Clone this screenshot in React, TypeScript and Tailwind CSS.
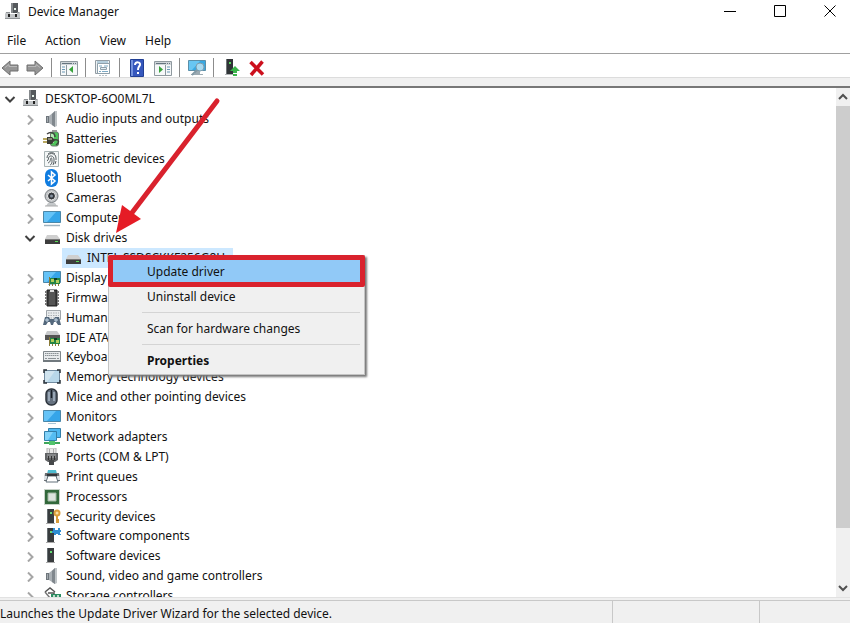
import React from 'react';

type IconProps = { children: React.ReactNode; className?: string };

const Icon: React.FC<IconProps> = ({ children, className = 'h-[18px] w-[18px]' }) => (
  <svg viewBox="0 0 18 18" className={`${className} shrink-0`} aria-hidden="true">
    {children}
  </svg>
);

const ComputerTower = () => (
  <Icon>
    <path d="M7 0h7v10H7z" fill="#55595c" />
    <path d="M7 0h2v10H7z" fill="#85898c" />
    <path d="M10 5h2v2h-2z" fill="#e9f5ec" />
    <path d="M2 9h4v2h7V9h3v7H1v-5z" fill="#c3c6c8" />
    <path d="M2 9h4v1H2zM13 9h2v1h-2zM1 15h15v1H1z" fill="#8f9396" />
    <path d="M4 11h2v3H4zM11 11h2v3h-2z" fill="#222" />
  </Icon>
);

const Speaker = () => (
  <Icon>
    <path d="M3 6h3v7H3z" fill="#6f767c" />
    <path d="M4 7h1v5H4z" fill="#a4abb0" />
    <path d="M6 6l6-5v16l-6-4z" fill="#a9afb4" />
    <path d="M9 4l3-3v16l-3-2z" fill="#80878d" />
    <path d="M12 1h2v15l-2 1z" fill="#bfc4c7" />
  </Icon>
);

const Battery = () => (
  <Icon>
    <rect x="7.500" y="2" width="8" height="14" rx="2" fill="#4fc45a" stroke="#69756b" />
    <path d="M8 4h3v9H8z" fill="#b4ecb4" />
    <path d="M9 0h5v2H9z" fill="#999" />
    <path d="M4 4c4-3 8-1 8 3" fill="none" stroke="#444" strokeWidth="1.500" />
    <path d="M4 7h5l3 3-3 4H4z" fill="#3b3c36" />
    <path d="M5 8h4v2H5z" fill="#888a78" />
    <path d="M0 9h4M0 12h4" stroke="#a18a2c" strokeWidth="1.500" />
    <path d="M11 10c5-1 6 2 2 5" fill="none" stroke="#3d453d" strokeWidth="1.500" />
  </Icon>
);

const Fingerprint = () => (
  <Icon>
    <path d="M1.500 1.500h14v15h-14z" fill="#f4f7f7" stroke="#a8b3b4" />
    <g fill="none" stroke="#586064">
      <path d="M4 8c0-6 9-6 9 0v2M4 11c2-1 1-3 2-4 1-2 5-1 5 2v3" />
      <path d="M5 13c3-1 2-4 3-5s1 3 1 4-1 3-2 3M10 15l1-3M5 4c2-2 5-2 7 0M12 14l1-3" />
    </g>
  </Icon>
);

const Bluetooth = () => (
  <Icon>
    <rect x="2" y="0" width="13" height="18" rx="6" fill="#0f7ce0" />
    <path d="M5 6l7 6-3.500 3V3L12 6l-7 6" fill="none" stroke="#fff" strokeWidth="1.500" />
  </Icon>
);

const Camera = () => (
  <Icon>
    <path d="M5 14h7l2 3H3z" fill="#c4c7c9" />
    <circle cx="8.500" cy="7" r="6.500" fill="#c1c4c6" stroke="#777c80" />
    <circle cx="8.500" cy="7" r="4" fill="#34383c" stroke="#eee" />
    <circle cx="8.500" cy="7" r="1.500" fill="#8792a0" />
    <path d="M2 17h13" stroke="#aaa" />
  </Icon>
);

const Screen: React.FC<{ base?: boolean }> = ({ base }) => (
  <>
    <path d="M.5 2.500h17v11H.5z" fill="#36a5e8" stroke="#4b87a8" />
    <path d="M1 3h12L4 13H1z" fill="#65c3f7" />
    {base ? <path d="M1 16.500h16" stroke="#9fb3bf" strokeWidth="1.500" /> : <path d="M5 15.500h8" stroke="#a8c6d7" />}
  </>
);

const Computer = () => <Icon><Screen base /></Icon>;
const Monitor = () => <Icon><Screen /></Icon>;

const Disk = () => (
  <Icon>
    <path d="M4 6h10l3 4H2z" fill="#cfcfcf" />
    <path d="M2 10h15v5H2z" fill="#3e3e3e" />
    <path d="M2 10h15v1H2z" fill="#777" />
    <path d="M12 12h3v1h-3z" fill="#59db57" />
  </Icon>
);

const Board = () => (
  <>
    <path d="M7 9h10v6H7z" fill="#238443" />
    <path d="M8 10h3v3H8zM13 11h3v3h-3z" fill="#b1cc5b" />
    <path d="M6.500 8v9M9.500 15v2M12.500 15v2M15.500 15v2" stroke="#8a7a36" />
    <path d="M11 9h3v2h-3z" fill="#113e24" />
  </>
);

const Display = () => <Icon><Screen /><Board /></Icon>;

const IdeController = () => (
  <Icon>
    <path d="M4 2h10l3 4H2z" fill="#c8cacc" />
    <path d="M2 6h15v5H2z" fill="#555" />
    <Board />
  </Icon>
);

const Firmware = () => (
  <Icon>
    <path d="M4 1h10v16H4z" fill="#3c3c3c" stroke="#222" />
    <path d="M6 2h6v14H6z" fill="#555" />
    <path d="M3 2v15M15 2v15" stroke="#777" strokeWidth="2" strokeDasharray="2 1" />
    <path d="M7 1h4v2H7z" fill="#ddd" />
  </Icon>
);

const Gamepad = () => (
  <Icon>
    <path d="M3.500 1.500h14v9h-14z" fill="#e9ecee" stroke="#9fa5aa" />
    <path d="M5 4h11M5 6.500h11M5 9h11" stroke="#a8adb1" strokeDasharray="1.500 1" />
    <path d="M2 8h4l1 2h4l1-2h4l2 8h-3l-2-3h-2l-1 3H8l-1-3H5l-2 3H0z" fill="#54687c" />
    <path d="M4 9v4M2 11h4M13 9v4M11 11h4" stroke="#c7d9e8" />
  </Icon>
);

const Keyboard = () => (
  <Icon>
    <path d="M.5 3.500h17v10H.5z" fill="#e7eaec" stroke="#7f878b" />
    <path d="M2 5.500h14M2 7.500h14" stroke="#8b9296" strokeDasharray="1.500 .5" />
    <path d="M2 10.500h2M5 10.500h8M14 10.500h2" stroke="#8b9296" />
    <path d="M0 12h18v2H0z" fill="#71797e" />
  </Icon>
);

const MemoryCard = () => (
  <Icon>
    <rect x="1.500" y="2.500" width="15" height="12" rx="1" fill="#b8d7e9" stroke="#718ba0" />
    <path d="M2 3h10L4 14H2z" fill="#d0e4ef" />
    <path d="M1 5V2h3M14 2h3v3M17 12v3h-3M4 15H1v-3" fill="none" stroke="#29323a" strokeWidth="1.500" />
  </Icon>
);

const Mouse = () => (
  <Icon>
    <rect x="3" y="1" width="11" height="16" rx="5" fill="#65717f" stroke="#2c333b" strokeWidth="1.500" />
    <path d="M6 4v9M11 4v9" stroke="#a9b8c7" strokeWidth="1.500" />
    <path d="M8.500 2v8" stroke="#171e26" strokeWidth="1.500" />
  </Icon>
);

const Network = () => (
  <Icon>
    <path d="M5.500 .5h12v9h-12z" fill="#4db8f1" stroke="#327fa9" />
    <path d="M1.500 3.500h12v9h-12z" fill="#55bdf2" stroke="#327fa9" />
    <path d="M2 4h8l-5 8H2z" fill="#83d3f9" />
    <path d="M7 13h3v2H7zM1 14h16v2H1z" fill="#3fa75a" />
    <path d="M6 13h6v4H6z" fill="#52c46c" />
  </Icon>
);

const Port = () => (
  <Icon>
    <path d="M4 0h9v6H4z" fill="#e8e8e8" stroke="#b3b3b3" />
    <path d="M6.500 1v4M10.500 1v4" stroke="#a9a9a9" />
    <path d="M2 5h13v7l-3 2H5l-3-2z" fill="#626466" />
    <path d="M4 6h9v4H4z" fill="#858789" />
    <path d="M6 12h5v5H6z" fill="#46484a" />
    <path d="M5 8h1v4H5zM8 8h1v4H8zM11 8h1v4h-1z" fill="#333" />
  </Icon>
);

const Printer = () => (
  <Icon>
    <path d="M5 2h8l1 4H4z" fill="#4dbbd0" />
    <path d="M2 5h14l1 8H1z" fill="#696e72" />
    <path d="M1 8h3v4H1zM14 8h3v4h-3z" fill="#dbe1e5" />
    <path d="M5 8h8l2 6H3z" fill="#fff" stroke="#63717a" />
    <path d="M4 6h10v2H4z" fill="#31363a" />
  </Icon>
);

const Processor = () => (
  <Icon>
    <path d="M1.500 1.500h15v15h-15z" fill="none" stroke="#8fa491" strokeDasharray="1 1" />
    <path d="M2 2h14v14H2z" fill="#32683b" />
    <path d="M5 5h8v8H5z" fill="#dce3dd" stroke="#a0b8a2" />
  </Icon>
);

const Tower = () => (
  <>
    <path d="M4 1h7v14H4z" fill="#383c3e" />
    <path d="M4 1h1v14H4z" fill="#697074" />
    <path d="M7 4h2v2H7z" fill="#65de74" />
    <path d="M3 15h9v1H3z" fill="#aaa" />
  </>
);

const Security = () => (
  <Icon>
    <Tower />
    <path d="M14 6v9M14 12h2M14 14h2" stroke="#d99c39" strokeWidth="2" />
    <circle cx="14" cy="5" r="2.500" fill="#f8dfa2" stroke="#d99c39" strokeWidth="2" />
  </Icon>
);

const SoftwareComponent = () => (
  <Icon>
    <Tower />
    <path d="M10 1h2v2h3V1h2v2h1v2h-1v2h1v1h-3V7h-2v1h-2V6H9V4h1z" fill="#2f8ed2" />
  </Icon>
);

const SoftwareDevice = () => <Icon><Tower /></Icon>;

const Storage = () => (
  <Icon>
    <path d="M2 5l5-4 5 4M5 6h6v2H8" fill="none" stroke="#555" strokeWidth="1.500" />
    <path d="M2 5l5 6" stroke="#777" strokeWidth="1.500" />
    <path d="M8 7h10v6H8z" fill="#2c8c62" />
    <path d="M10 8h2v2h-2zM14 8h2v2h-2z" fill="#bcd9c9" />
  </Icon>
);

const devices: { name: string; icon: React.FC; child?: string }[] = [
  { name: 'Audio inputs and outputs', icon: Speaker },
  { name: 'Batteries', icon: Battery },
  { name: 'Biometric devices', icon: Fingerprint },
  { name: 'Bluetooth', icon: Bluetooth },
  { name: 'Cameras', icon: Camera },
  { name: 'Computer', icon: Computer },
  { name: 'Disk drives', icon: Disk, child: 'INTEL SSDSCKKF256G8H' },
  { name: 'Display adapters', icon: Display },
  { name: 'Firmware', icon: Firmware },
  { name: 'Human Interface Devices', icon: Gamepad },
  { name: 'IDE ATA/ATAPI controllers', icon: IdeController },
  { name: 'Keyboards', icon: Keyboard },
  { name: 'Memory technology devices', icon: MemoryCard },
  { name: 'Mice and other pointing devices', icon: Mouse },
  { name: 'Monitors', icon: Monitor },
  { name: 'Network adapters', icon: Network },
  { name: 'Ports (COM & LPT)', icon: Port },
  { name: 'Print queues', icon: Printer },
  { name: 'Processors', icon: Processor },
  { name: 'Security devices', icon: Security },
  { name: 'Software components', icon: SoftwareComponent },
  { name: 'Software devices', icon: SoftwareDevice },
  { name: 'Sound, video and game controllers', icon: Speaker },
  { name: 'Storage controllers', icon: Storage },
];

const Chevron: React.FC<{ open?: boolean; label: string }> = ({ open, label }) => (
  <button type="button" aria-label={`${open ? 'Collapse' : 'Expand'} ${label}`} className="flex h-4 w-4 shrink-0 items-center justify-center">
    <svg viewBox="0 0 12 12" className="h-3 w-3" fill="none" strokeWidth="2" aria-hidden="true">
      {open ? <path d="M1.500 4L6 8.500 10.500 4" stroke="#404040" /> : <path d="M4 2.500L8.500 7 4 11.500" stroke="#a6a6a6" />}
    </svg>
  </button>
);

const WindowFrame = () => (
  <>
    <path d="M.5 2.500h17v14H.5z" fill="#f6f8f9" stroke="#8f999f" />
    <path d="M1 3h16v3H1z" fill="#cfd5d9" />
    <path d="M2 4.500h10M13 4.500h1M15 4.500h1" stroke="#65747f" />
  </>
);

const ToolButton: React.FC<{ label: string; children: React.ReactNode }> = ({ label, children }) => (
  <button type="button" aria-label={label} title={label} className="shrink-0 first:ml-px">
    <Icon>{children}</Icon>
  </button>
);

const Divider = () => <span className="mr-2 ml-[7px] h-5 w-px shrink-0 bg-[#8c8c8c]" />;

const Toolbar = () => (
  <div role="toolbar" aria-label="Tools" className="flex h-6 items-center border-t border-[#a0a0a0] bg-white pt-1">
    <ToolButton label="Back">
      <path d="M1 9l8-7v4h8v6H9v4z" fill="#969696" stroke="#6e6e6e" />
      <path d="M4 8.500l4-3v2h8" fill="none" stroke="#b9b9b9" />
    </ToolButton>
    <span className="w-[7px]" />
    <ToolButton label="Forward">
      <path d="M17 9L9 2v4H1v6h8v4z" fill="#969696" stroke="#6e6e6e" />
      <path d="M2 7.500h8v-2l4 3" fill="none" stroke="#b9b9b9" />
    </ToolButton>
    <Divider />
    <ToolButton label="Show console tree">
      <WindowFrame />
      <path d="M6.500 6v10" stroke="#8b989f" />
      <path d="M2 8h3M2 10.500h3M2 13h3" stroke="#6997b5" />
      <path d="M13 7v7l-4-3.500z" fill="#38a33c" />
    </ToolButton>
    <Divider />
    <ToolButton label="Properties">
      <path d="M1.500 1.500h14v13h-14z" fill="#edf1f3" stroke="#929ca3" />
      <path d="M3.500 4.500h12v10h-12z" fill="#fff" stroke="#8fa0aa" />
      <path d="M3 3h11M5 7h3M10 7h4M5 12.500h2M8 12.500h6" stroke="#7baac5" />
      <path d="M6.500 8.500h6v2h-6z" fill="#e2edf3" stroke="#8fa0aa" />
      <path d="M5 16.500h9" stroke="#b9c1c6" strokeDasharray="2 1" />
    </ToolButton>
    <Divider />
    <ToolButton label="Help">
      <path d="M2.500.5h13v17h-13z" fill="#3557bd" stroke="#213f94" />
      <path d="M3 1h2v16H3z" fill="#7392df" />
      <path d="M7 6c0-4 6-3 5 0-1 2-2 2-2 5" fill="none" stroke="#fff" strokeWidth="2" />
      <path d="M9 13h2v2H9z" fill="#fff" />
    </ToolButton>
    <span className="w-2" />
    <ToolButton label="Show action pane">
      <WindowFrame />
      <path d="M11.500 6v10" stroke="#8b989f" />
      <path d="M13 8h3M13 10.500h3M13 13h3" stroke="#6997b5" />
      <path d="M5 7v7l4-3.500z" fill="#38a33c" />
    </ToolButton>
    <Divider />
    <ToolButton label="Scan for hardware changes">
      <path d="M.5 1.500h17v10H.5z" fill="#38a9e3" stroke="#5a8fa9" />
      <path d="M1 2h11L4 11H1z" fill="#68c6f3" />
      <path d="M7 12h5v3H7zM3 15h12v1H3z" fill="#9caab2" />
      <circle cx="12" cy="8" r="4" fill="#a8daf1" stroke="#7e9eaf" />
      <path d="M9 11l-5 5" stroke="#8299a5" strokeWidth="2" />
    </ToolButton>
    <Divider />
    <ToolButton label="Update driver">
      <path d="M4 0h7v15H4z" fill="#303437" />
      <path d="M4 0h1v15H4z" fill="#72777a" />
      <path d="M7 3h2v2H7z" fill="#55d75d" />
      <path d="M3 15h8v1H3z" fill="#b0b3b5" />
      <path d="M13 7l5 5h-3v2h-4v-2H8zM11 15h4v2h-4z" fill="#39b54a" />
    </ToolButton>
    <span className="w-2" />
    <ToolButton label="Uninstall device">
      <path d="M2.500 3L15 15.500M14.500 2.500L3 16" stroke="#cc101d" strokeWidth="3.500" />
    </ToolButton>
  </div>
);

const ContextMenu = () => (
  <div className="absolute top-[167px] left-[108px] z-10 w-[257px] border border-[#c4c4c4] bg-[#f0f0f0] shadow-[2px_2px_2px_#777]" role="menu">
    <button type="button" role="menuitem" className="block h-7 w-full bg-[#91c9f7] pt-1 pl-[38px] text-left">Update driver</button>
    <button type="button" role="menuitem" className="block h-[26px] w-full pl-[38px] text-left">Uninstall device</button>
    <hr className="mt-0.5 mr-1 mb-[3px] ml-[33px] border-[#d4d4d4]" />
    <button type="button" role="menuitem" className="block h-[26px] w-full pl-[38px] text-left">Scan for hardware changes</button>
    <hr className="mt-0.5 mr-1 mb-[3px] ml-[33px] border-[#d4d4d4]" />
    <button type="button" role="menuitem" className="block h-[26px] w-full pl-[38px] text-left font-bold">Properties</button>
    <div className="pointer-events-none absolute -top-px -left-px h-8 w-[257px] rounded-xs border-[5px] border-[#d9222d]" />
  </div>
);

const DeviceTree = () => (
  <ul role="tree" aria-label="Devices" className="mt-px grid h-[517px] flex-1 auto-rows-fr">
    <li role="treeitem" aria-expanded="true" className="flex items-center pl-0.5">
      <Chevron open label="DESKTOP-6O0ML7L" />
      <span className="ml-1"><ComputerTower /></span>
      <span className="ml-[5px]">DESKTOP-6O0ML7L</span>
    </li>
    {devices.map(({ name, icon: DeviceIcon, child }) => (
      <React.Fragment key={name}>
        <li role="treeitem" aria-level={2} aria-expanded={!!child} className="flex items-center pl-[22px]">
          <Chevron open={!!child} label={name} />
          <span className="ml-[5px]"><DeviceIcon /></span>
          <span className="ml-[5px]">{name}</span>
        </li>
        {child && (
          <li role="treeitem" aria-level={3} aria-selected="true" className="flex pl-[62px]">
            <span className="flex items-center bg-[#cce8ff] pr-2 pl-0.5">
              <Disk />
              <span className="ml-[5px]">{child}</span>
            </span>
          </li>
        )}
      </React.Fragment>
    ))}
  </ul>
);

const ScrollBar = () => (
  <div className="flex w-[14px] shrink-0 flex-col bg-[#f0f0f0]">
    <button type="button" aria-label="Scroll up" className="flex h-[18px] items-center justify-center">
      <svg viewBox="0 0 10 10" className="h-[10px] w-[10px]" fill="none" stroke="#505050" strokeWidth="2"><path d="M1 7l4-4 4 4" /></svg>
    </button>
    <div className="flex flex-1 flex-col">
      <div className="flex-[421] bg-[#cdcdcd]" />
      <div className="flex-[51]" />
    </div>
    <button type="button" aria-label="Scroll down" className="flex h-[18px] items-center justify-center">
      <svg viewBox="0 0 10 10" className="h-[10px] w-[10px]" fill="none" stroke="#505050" strokeWidth="2"><path d="M1 3l4 4 4-4" /></svg>
    </button>
  </div>
);

export default function App() {
  return (
    <div className="flex h-screen flex-col overflow-hidden bg-white font-['Noto_Sans',sans-serif] text-[12px] leading-5 whitespace-nowrap text-[#111]">
      <header className="flex h-7 shrink-0 items-center pl-1">
        <span className="pb-1"><ComputerTower /></span>
        <h1 className="ml-1.5 flex-1 pb-1">Device Manager</h1>
        <div className="flex pb-1.5">
          <button type="button" aria-label="Minimize" className="flex w-[50px] justify-center pl-2.5">
            <svg viewBox="0 0 12 12" className="h-3 w-3" fill="none" stroke="#000"><path d="M0 6.500h12" /></svg>
          </button>
          <button type="button" aria-label="Maximize" className="flex w-[50px] justify-center pl-2.5">
            <svg viewBox="0 0 12 12" className="h-3 w-3" fill="none" stroke="#000"><path d="M.5.5h11v11H.5z" /></svg>
          </button>
          <button type="button" aria-label="Close" className="flex w-[50px] justify-center pl-2.5">
            <svg viewBox="0 0 12 12" className="h-3 w-3" fill="none" stroke="#000"><path d="M.5.5l11 11M11.500.5l-11 11" /></svg>
          </button>
        </div>
      </header>
      <nav aria-label="Menu bar" className="flex h-[25px] shrink-0 items-center gap-[19px] pl-[7px]">
        <button type="button">File</button>
        <button type="button">Action</button>
        <button type="button">View</button>
        <button type="button">Help</button>
      </nav>
      <Toolbar />
      <div className="h-[9px] shrink-0 border-t border-[#dcdcdc] bg-[#f0f0f0]" />
      <main className="relative flex min-h-0 flex-1 overflow-hidden border-t-2 border-[#777]">
        <DeviceTree />
        <ScrollBar />
        <ContextMenu />
        <svg viewBox="0 0 110 142" className="pointer-events-none absolute top-[7px] left-[112px] z-20 h-[142px] w-[110px]" aria-hidden="true">
          <path d="M105 6L19 119" stroke="#d9222d" strokeWidth="5" strokeLinecap="round" />
          <path d="M4 138l6-28 19 14z" fill="#e51c26" />
        </svg>
      </main>
      <footer className="flex h-[26px] shrink-0 border-t border-[#e2e2e2] bg-[#f0f0f0] pt-0.5">
        <p className="flex-1 border-t border-[#c8c8c8] pt-[3px]">Launches the Update Driver Wizard for the selected device.</p>
        <span className="w-[147px] border-t border-l border-[#c8c8c8]" />
        <span className="w-[91px] border-t border-l border-[#c8c8c8]" />
      </footer>
    </div>
  );
}
